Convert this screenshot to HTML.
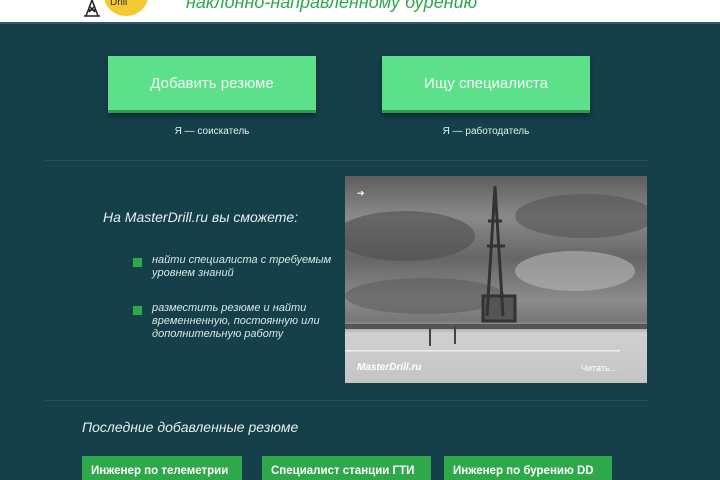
<!DOCTYPE html>
<html><head><meta charset="utf-8"><style>
*{margin:0;padding:0;box-sizing:border-box}
body{width:720px;height:480px;overflow:hidden;background:#15404a;font-family:"Liberation Sans",sans-serif;position:relative;color:#fff}
.hdr{position:absolute;left:0;top:0;width:720px;height:24px;background:#fff;border-bottom:2px solid #2d5a60}
.a{position:absolute}
.btn{position:absolute;top:56px;width:208px;height:57px;background:#5ce08a;border-bottom:3px solid #2f9a55;box-shadow:0 3px 6px rgba(0,0,0,.4);text-align:center;line-height:56px;font-size:15px;color:#f4fff6}
.sub{position:absolute;top:126px;width:208px;text-align:center;font-size:10px;color:#e6eeee}
.line{position:absolute;left:45px;width:603px;height:1px;background:#24525a}
.li{position:absolute;left:152px;font-size:11px;font-style:italic;color:#d8e6e6;line-height:13px}
.sq{position:absolute;left:133px;width:9px;height:9px;background:#2ea84a}
.card{position:absolute;top:456px;height:24px;background:#2ea84a;font-size:11.5px;font-weight:bold;padding:9px 0 0 9px;color:#fff}
</style></head><body>
<div class="hdr">
<svg class="a" style="left:82px;top:0" width="20" height="18" viewBox="0 0 20 18"><path d="M10 0 L4 16 M10 0 L16 16 M6 10 H14 M7 6 L13 12 M13 6 L7 12 M2 16 H18" stroke="#222" stroke-width="1.5" fill="none"/></svg>
<div class="a" style="left:104px;top:-24px;width:44px;height:40px;border-radius:50%;background:#f6c832"></div>
<div class="a" style="left:110px;top:-3px;font-size:10px;color:#333">Drill</div>
<div class="a" style="left:186px;top:-8px;font-size:18px;font-style:italic;color:#2ea84a">наклонно-направленному бурению</div>
</div>
<div class="btn" style="left:108px">Добавить резюме</div>
<div class="btn" style="left:382px">Ищу специалиста</div>
<div class="sub" style="left:108px">Я — соискатель</div>
<div class="sub" style="left:382px">Я — работодатель</div>
<div class="line" style="top:160px"></div>
<div class="a" style="left:103px;top:209px;font-size:14px;font-style:italic;color:#e4eeee">На MasterDrill.ru вы сможете:</div>
<div class="sq" style="top:258px"></div>
<div class="li" style="top:254px">найти специалиста с требуемым<br>уровнем знаний</div>
<div class="sq" style="top:306px"></div>
<div class="li" style="top:302px">разместить резюме и найти<br>временненную, постоянную или<br>дополнительную работу</div>
<div class="a" style="left:345px;top:176px;width:302px;height:207px;background:linear-gradient(#5e5e5e 0%,#8a8a8a 20%,#666 40%,#8c8c8c 60%,#777 70%,#d0d0d0 76%,#c4c4c4 100%);overflow:hidden">
<svg width="302" height="207"><ellipse cx="60" cy="60" rx="70" ry="25" fill="#4e4e4e" opacity=".6"/><ellipse cx="240" cy="40" rx="70" ry="22" fill="#555" opacity=".6"/><ellipse cx="230" cy="95" rx="60" ry="20" fill="#b8b8b8" opacity=".6"/><ellipse cx="80" cy="120" rx="80" ry="18" fill="#555" opacity=".5"/><path d="M150 10 L142 140 M150 10 L158 140 M143 45 H157 M142 70 H160 M138 120 H170 V145 H138 Z" stroke="#333" stroke-width="3" fill="#555"/><rect x="0" y="148" width="302" height="5" fill="#555"/><path d="M85 152 V170 M110 150 V168" stroke="#444" stroke-width="2"/><rect x="0" y="174" width="275" height="1.5" fill="#eee"/></svg>
<div class="a" style="left:12px;top:186px;font-size:10px;font-style:italic;font-weight:bold">MasterDrill.ru</div>
<div class="a" style="left:236px;top:187px;font-size:9px">Читать...</div>
<div class="a" style="left:12px;top:12px;font-size:9px">➔</div>
</div>
<div class="line" style="top:400px"></div>
<div class="a" style="left:82px;top:419px;font-size:14px;font-style:italic;color:#e4eeee">Последние добавленные резюме</div>
<div class="card" style="left:82px;width:160px">Инженер по телеметрии</div>
<div class="card" style="left:262px;width:169px">Специалист станции ГТИ</div>
<div class="card" style="left:444px;width:168px">Инженер по бурению DD</div>
</body></html>
